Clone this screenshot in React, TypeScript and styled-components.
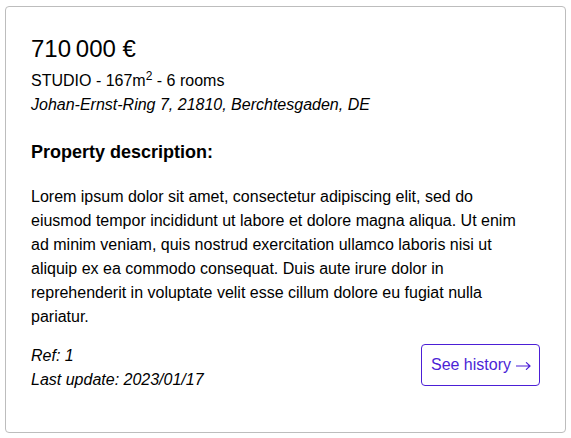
import styled, { createGlobalStyle } from "styled-components";

const GlobalStyle = createGlobalStyle`
  body {
    margin: 0;
    font-family: "Liberation Sans", Arial, sans-serif;
    color: #000;
    background: #fff;
  }
`;

const Page = styled.div`
  padding: 6px 5px;
`;

const Card = styled.article`
  border: 1px solid #bdbdbd;
  border-radius: 4px;
  padding: 26px 25px 24px 25px;
`;

const Price = styled.h1`
  margin: 2px 0 0 0;
  font-size: 24px;
  font-weight: 400;
  line-height: 28px;
`;

const Line = styled.p<{ $italic?: boolean }>`
  margin: 0;
  font-size: 16px;
  line-height: 24px;
  font-style: ${(p) => (p.$italic ? "italic" : "normal")};
`;

const Summary = styled(Line)`
  margin-top: 6px;

  sup {
    font-size: 12px;
    line-height: 0;
    vertical-align: 6px;
  }
`;

const Heading = styled.h2`
  margin: 22px 0 0 0;
  font-size: 18px;
  font-weight: 700;
  line-height: 27px;
`;

const Description = styled(Line)`
  margin-top: 19px;
  max-width: 505px;
`;

const Footer = styled.footer`
  display: flex;
  justify-content: space-between;
  align-items: flex-start;
  margin-top: 15px;
  padding-bottom: 16px;
`;

const HistoryButton = styled.button`
  display: inline-flex;
  align-items: center;
  gap: 5px;
  padding: 8px 8px 8px 9px;
  border: 1px solid #4c1fd6;
  border-radius: 4px;
  background: #fff;
  color: #4c1fd6;
  font-family: inherit;
  font-size: 16px;
  line-height: 24px;
  cursor: pointer;

  svg {
    margin-top: 1px;
  }
`;

const ArrowIcon = () => (
  <svg width="15" height="10" viewBox="0 0 15 10" fill="none" aria-hidden="true">
    <path
      d="M0.5 5H14M10.4 1.6L14 5L10.4 8.4"
      stroke="currentColor"
      strokeWidth="1.2"
      strokeLinecap="round"
      strokeLinejoin="round"
    />
  </svg>
);

const DESCRIPTION =
  "Lorem ipsum dolor sit amet, consectetur adipiscing elit, sed do eiusmod tempor incididunt ut labore et dolore magna aliqua. Ut enim ad minim veniam, quis nostrud exercitation ullamco laboris nisi ut aliquip ex ea commodo consequat. Duis aute irure dolor in reprehenderit in voluptate velit esse cillum dolore eu fugiat nulla pariatur.";

export default function App() {
  return (
    <Page>
      <GlobalStyle />
      <Card>
        <Price>710&#8239;000 €</Price>
        <Summary>
          STUDIO - 167m<sup>2</sup> - 6 rooms
        </Summary>
        <Line $italic>Johan-Ernst-Ring 7, 21810, Berchtesgaden, DE</Line>
        <Heading>Property description:</Heading>
        <Description>{DESCRIPTION}</Description>
        <Footer>
          <div>
            <Line $italic>Ref: 1</Line>
            <Line $italic>Last update: 2023/01/17</Line>
          </div>
          <HistoryButton>
            See history
            <ArrowIcon />
          </HistoryButton>
        </Footer>
      </Card>
    </Page>
  );
}
